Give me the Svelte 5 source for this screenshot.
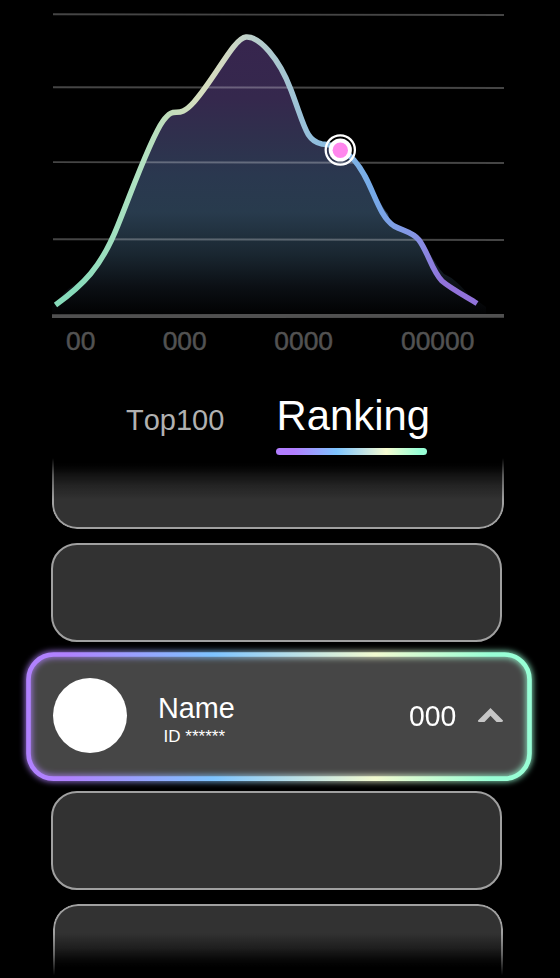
<script>
  const axis = [
    { label: '00', width: 29 },
    { label: '000', width: 44 },
    { label: '0000', width: 59 },
    { label: '00000', width: 74 }
  ];
  const curve =
    'M55.5 305 C83 285 101 268 118 225 C130 196 150 139 163 121 C176 103 176 122 194 102 C216 77 234 38 246 37 C259 36 279 58 291 90 C305 127 306 141 322 144 C335 145 344 149 354 160 C373 181 376 214 394 226 C403 231 413 232 419 240 C428 252 432 271 442 281 C450 288 465 296 477 303.5';
  const area =
    'M52 307 L60 298 Q68 287 77 284 C96 268 107 250 118 225 C130 196 150 139 163 125 C176 106 176 122 194 102 C216 77 234 38 246 37 C259 36 279 58 291 90 C305 127 306 141 322 144 C335 145 344 149 354 160 C370 178 377 201 388 214 L390 222 C403 231 413 232 419 240 C428 248 435 265 444 274 C455 279 461 286 468 294 L486 307 L486 315 L52 315 Z';
</script>

<main>
  <svg class="chart" width="560" height="320" viewBox="0 0 560 320">
    <defs>
      <linearGradient id="fill" gradientUnits="userSpaceOnUse" x1="0" y1="37" x2="0" y2="315">
        <stop offset="0" stop-color="#37254e" />
        <stop offset=".22" stop-color="#35284d" />
        <stop offset=".36" stop-color="#2f304d" />
        <stop offset=".5" stop-color="#2a384f" />
        <stop offset=".63" stop-color="#283b4d" />
        <stop offset=".78" stop-color="#1a2731" />
        <stop offset=".9" stop-color="#0b0f14" />
        <stop offset="1" stop-color="#010102" />
      </linearGradient>
      <linearGradient id="line" gradientUnits="userSpaceOnUse" x1="75" y1="300" x2="440" y2="325">
        <stop offset="0" stop-color="#87dbba" />
        <stop offset=".15" stop-color="#b0e2c2" />
        <stop offset=".22" stop-color="#c0dcba" />
        <stop offset=".3" stop-color="#d6debf" />
        <stop offset=".36" stop-color="#d3d9c2" />
        <stop offset=".44" stop-color="#b8cdcb" />
        <stop offset=".54" stop-color="#a3c4d2" />
        <stop offset=".66" stop-color="#8abce2" />
        <stop offset=".79" stop-color="#75aae8" />
        <stop offset=".91" stop-color="#8595e5" />
        <stop offset="1" stop-color="#9172da" />
      </linearGradient>
    </defs>
    <path d={area} fill="url(#fill)" />
    <g stroke="#fff" stroke-opacity=".27" stroke-width="1.9">
      <path d="M53 14.3 L504 15" />
      <path d="M53 87.2 L504 88" />
      <path d="M53 162.1 L504 163" />
      <path d="M53 239.2 L504 240" />
    </g>
    <path d="M52 316.2 L504 315.8" stroke="#505050" stroke-width="3.8" />
    <path d={curve} fill="none" stroke="url(#line)" stroke-width="5.5" stroke-linejoin="round" />
    <circle cx="340.3" cy="150" r="14.6" fill="none" stroke="#fff" stroke-width="2.3" />
    <circle cx="340.3" cy="150" r="11.6" fill="#fff" />
    <circle cx="340.3" cy="150.3" r="7.7" fill="#ff86ed" />
  </svg>

  <div class="axis">
    {#each axis as a}<span style="width: {a.width}px">{a.label}</span>{/each}
  </div>

  <nav>
    <span class="tab">Top100</span>
    <span class="tab active">Ranking</span>
  </nav>

  <section>
    <div class="card first"></div>
    <div class="card"></div>
    <article>
      <svg class="frame" width="560" height="148" viewBox="0 0 560 148">
        <defs>
          <linearGradient id="rim" gradientUnits="userSpaceOnUse" x1="26" y1="0" x2="532" y2="0">
            <stop offset=".08" stop-color="#b081ff" />
            <stop offset=".37" stop-color="#7ec4ff" />
            <stop offset=".69" stop-color="#f2fad0" />
            <stop offset=".92" stop-color="#98ffd6" />
          </linearGradient>
          <filter id="glow" filterUnits="userSpaceOnUse" x="0" y="0" width="560" height="148">
            <feGaussianBlur stdDeviation="3" />
          </filter>
        </defs>
        <rect x="28.5" y="12.5" width="501" height="124.1" rx="25" fill="#464646" />
        <rect x="28.5" y="12.5" width="501" height="124.1" rx="25" fill="none" stroke="url(#rim)" stroke-width="5.5" filter="url(#glow)" />
        <rect x="28.5" y="12.5" width="501" height="124.1" rx="25" fill="none" stroke="url(#rim)" stroke-width="4.6" />
      </svg>
      <div class="avatar"></div>
      <div class="who">
        <strong>Name</strong>
        <small>ID ******</small>
      </div>
      <span class="score">000</span>
      <svg class="arrow" width="27" height="16" viewBox="0 0 27 16">
        <path d="M13.5 1 L26 13.6 Q26.4 15 24.5 15 L19.5 15 L13.5 8.7 L7.5 15 L2 15 Q.4 15 1 13.6 Z" fill="#c6c6c6" />
      </svg>
    </article>
    <div class="card"></div>
    <div class="card last"></div>
  </section>
</main>

<style>
  :global(body) { background: #000; overflow: hidden; }
  main {
    width: 560px;
    height: 978px;
    overflow: hidden;
    background: #000;
    color: #fff;
    font-family: 'Liberation Sans', Arial, sans-serif;
  }
  .chart { display: block; }
  .axis {
    display: flex;
    justify-content: space-between;
    height: 30px;
    padding: 6px 85px 0 66px;
    color: #525252;
    font-size: 26.4px;
    line-height: 30px;
    -webkit-text-stroke: .5px #525252;
  }
  .axis span { white-space: nowrap; }
  nav {
    display: flex;
    align-items: flex-start;
    height: 66px;
    margin-top: 34px;
    padding-left: 126px;
  }
  .tab { width: 150px; padding-top: 14px; color: #b1b1b1; font-size: 29px; line-height: 32px; font-kerning: none; }
  .tab.active { padding-top: 1px; color: #fff; font-size: 41.8px; line-height: 50px; text-indent: .6px; }
  .active::after {
    content: '';
    display: block;
    width: 151px;
    height: 7px;
    margin-top: 7px;
    border-radius: 4px;
    background: linear-gradient(90deg, #b27eff 12%, #7ec4ff 40%, #f6fbd0 73%, #98ffd6 95%);
  }
  section { display: flex; flex-direction: column; }
  .card {
    box-sizing: border-box;
    width: 451px;
    height: 99px;
    margin-left: 51px;
    border: 2px solid #a0a0a0;
    border-radius: 26px;
    background: #323232;
  }
  .first {
    height: 73px;
    width: 452px;
    margin: 0 0 14px 52px;
    border-top: 0;
    border-radius: 0 0 25px 25px;
    background: linear-gradient(#000 8%, #222 26%, #303030 42%, #323232 60%);
    mask-image: linear-gradient(transparent 3%, rgba(0, 0, 0, .55) 26%, #000 60%);
  }
  article {
    position: relative;
    display: flex;
    align-items: flex-start;
    height: 149px;
  }
  .frame { position: absolute; left: 0; top: 0; }
  .avatar {
    position: relative;
    width: 74px;
    height: 75px;
    margin: 36px 0 0 53.4px;
    border-radius: 50%;
    background: #fff;
  }
  .who { position: relative; width: 251px; margin: 49px 0 0 30.6px; }
  .who strong { display: block; font-size: 28.8px; line-height: 34px; font-weight: 400; }
  .who small { display: block; padding: 2px 0 0 5.6px; font-size: 17px; line-height: 20px; }
  .score { position: relative; width: 68px; margin-top: 57px; font-size: 28.4px; line-height: 34px; transform: scaleY(1.04); }
  .arrow { position: relative; margin-top: 65px; }
  .last {
    flex: none;
    height: 76px;
    width: 450px;
    margin: 14px 0 0 53px;
    border-bottom: 0;
    border-radius: 25px 25px 0 0;
    background: linear-gradient(#323232 38%, #2a2a2a 57%, #1b1b1b 67%, #000 84%);
    mask-image: linear-gradient(#000 38%, rgba(0, 0, 0, .6) 67%, transparent 94%);
  }
</style>
